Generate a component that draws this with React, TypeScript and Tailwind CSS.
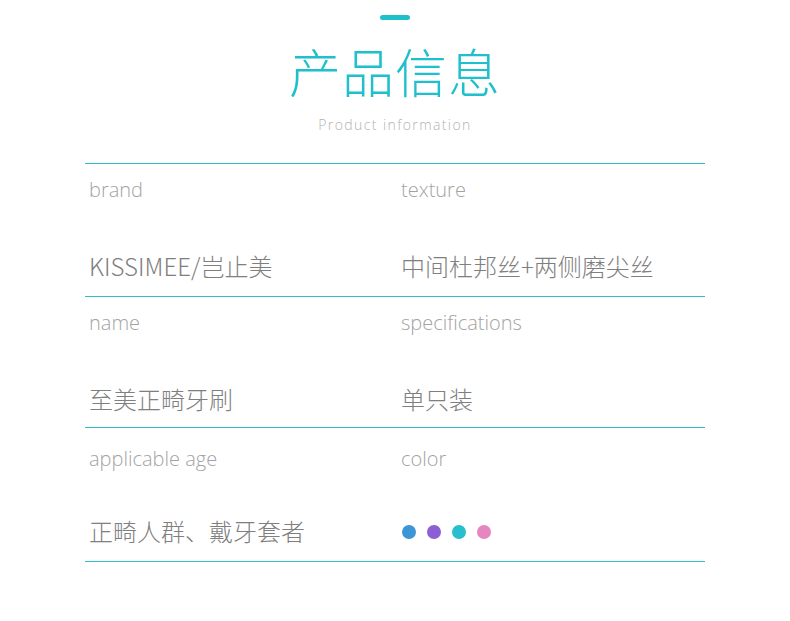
const rows = [
  {
    h: "h-[133px]",
    cells: [
      { label: "brand", value: "KISSIMEE/岂止美" },
      { label: "texture", value: "中间杜邦丝+两侧磨尖丝" },
    ],
  },
  {
    h: "h-[131px]",
    cells: [
      { label: "name", value: "至美正畸牙刷" },
      { label: "specifications", value: "单只装" },
    ],
  },
  {
    h: "h-[134px]",
    cells: [
      { label: "applicable age", value: "正畸人群、戴牙套者" },
      { label: "color", value: null },
    ],
  },
];

const dots = ["bg-[#3d95d6]", "bg-[#8e5ed5]", "bg-[#27bfcd]", "bg-[#e586c1]"];

export default function App() {
  return (
    <div className="w-[790px] h-[621px] bg-white font-['Open_Sans','Noto_Sans_CJK_SC',sans-serif]">
      <div className="flex flex-col items-center pt-[15px]">
        <div className="w-[30px] h-[5px] rounded-full bg-[#1fc0cc]" />
        <h1 className="mt-[20px] text-[52px] leading-[62px] font-light tracking-[1px] text-[#1fc0cc] font-['Noto_Sans_CJK_SC',sans-serif]">
          产品信息
        </h1>
        <p className="mt-[14px] text-[14px] leading-[18px] font-light tracking-[1.4px] text-[#b3b3b3]">
          Product information
        </p>
      </div>

      <div className="mx-auto mt-[29px] w-[620px] border-b border-[#2bbfca]">
        {rows.map((r, i) => (
          <div key={i} className={`grid grid-cols-2 border-t border-[#2bbfca] ${r.h}`}>
            {r.cells.map((c, j) => (
              <div key={c.label} className={`flex flex-col ${j === 1 ? "pl-[6px]" : "pl-[4px]"}`}>
                <div className={`${i === 2 ? "mt-[19px]" : "mt-[14px]"} text-[20px] leading-[24px] font-light text-[#a3a3a3]`}>
                  {c.label}
                </div>
                {c.value ? (
                  <div className={`${i === 2 ? "mt-[45px]" : "mt-[49px]"} text-[24px] leading-[30px] text-[#7f7f7f] font-['Noto_Sans_CJK_SC',sans-serif] font-light`}>
                    {c.value}
                  </div>
                ) : (
                  <div className="mt-[54px] flex gap-[11px] pl-[1px]">
                    {dots.map((d) => (
                      <span key={d} className={`w-[14px] h-[14px] rounded-full ${d}`} />
                    ))}
                  </div>
                )}
              </div>
            ))}
          </div>
        ))}
      </div>
    </div>
  );
}
